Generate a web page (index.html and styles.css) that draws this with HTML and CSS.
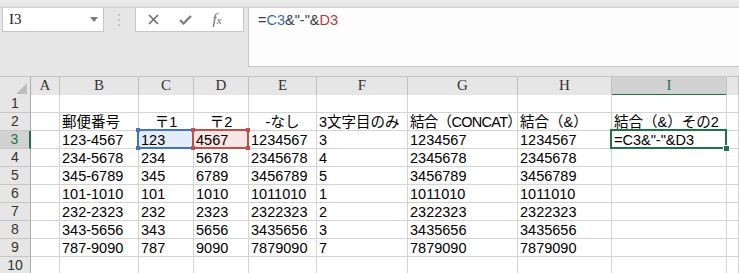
FILE: index.html
```html
<!DOCTYPE html>
<html lang="ja">
<head>
    <meta charset="UTF-8">
    <title>Excel 郵便番号</title>
    <link rel="stylesheet" href="styles.css">
</head>
<body>
    <div class="topstrip"></div>
    <div class="fbar">
        <div class="namebox">
            <span>I3</span>
            <svg class="dd" width="8" height="5" viewBox="0 0 8 5"><path d="M0 0H8L4 5Z" fill="#7a7a7a"/></svg>
        </div>
        <div class="grip">
            <svg width="3" height="14" viewBox="0 0 3 14"><rect x="0" y="1" width="2" height="2" fill="#c4c4c4"/><rect x="0" y="6" width="2" height="2" fill="#c4c4c4"/><rect x="0" y="11" width="2" height="2" fill="#c4c4c4"/></svg>
        </div>
        <div class="fbtns">
            <svg width="11" height="11" viewBox="0 0 11 11"><path d="M1 1L10 10M10 1L1 10" stroke="#707070" stroke-width="1.7"/></svg>
            <svg width="13" height="10" viewBox="0 0 13 10"><path d="M1 5L4.5 8.5L12 1" stroke="#7c7c7c" stroke-width="2.2" fill="none"/></svg>
            <span class="fx"><i>f</i><i class="x">x</i></span>
        </div>
        <div class="finput">=<span class="ref-b">C3</span>&amp;"-"&amp;<span class="ref-r">D3</span></div>
    </div>

    <div class="sheet">
        <div class="row hrow">
            <div class="corner"><svg width="11" height="11" viewBox="0 0 11 11"><path d="M11 0V11H0Z" fill="#bdbdbd"/></svg></div>
            <div class="ch">A</div><div class="ch">B</div><div class="ch">C</div><div class="ch">D</div><div class="ch">E</div>
            <div class="ch">F</div><div class="ch">G</div><div class="ch">H</div><div class="ch sel">I</div><div class="ch"></div>
        </div>
        <div class="row">
            <div class="rh">1</div>
            <div class="c"></div><div class="c"></div><div class="c"></div><div class="c"></div><div class="c"></div>
            <div class="c"></div><div class="c"></div><div class="c"></div><div class="c"></div><div class="c"></div>
        </div>
        <div class="row">
            <div class="rh">2</div>
            <div class="c"></div><div class="c">郵便番号</div><div class="c mid">〒1</div><div class="c mid">〒2</div><div class="c mid">-なし</div>
            <div class="c">3文字目のみ</div><div class="c tight">結合（CONCAT）</div><div class="c">結合（&amp;）</div><div class="c">結合（&amp;）その2</div><div class="c"></div>
        </div>
        <div class="row">
            <div class="rh sel">3</div>
            <div class="c"></div><div class="c">123-4567</div><div class="c blue">123</div><div class="c red">4567</div><div class="c">1234567</div>
            <div class="c">3</div><div class="c">1234567</div><div class="c">1234567</div><div class="c active">=C3&amp;"-"&amp;D3</div><div class="c"></div>
        </div>
        <div class="row">
            <div class="rh">4</div>
            <div class="c"></div><div class="c">234-5678</div><div class="c">234</div><div class="c">5678</div><div class="c">2345678</div>
            <div class="c">4</div><div class="c">2345678</div><div class="c">2345678</div><div class="c"></div><div class="c"></div>
        </div>
        <div class="row">
            <div class="rh">5</div>
            <div class="c"></div><div class="c">345-6789</div><div class="c">345</div><div class="c">6789</div><div class="c">3456789</div>
            <div class="c">5</div><div class="c">3456789</div><div class="c">3456789</div><div class="c"></div><div class="c"></div>
        </div>
        <div class="row">
            <div class="rh">6</div>
            <div class="c"></div><div class="c">101-1010</div><div class="c">101</div><div class="c">1010</div><div class="c">1011010</div>
            <div class="c">1</div><div class="c">1011010</div><div class="c">1011010</div><div class="c"></div><div class="c"></div>
        </div>
        <div class="row">
            <div class="rh">7</div>
            <div class="c"></div><div class="c">232-2323</div><div class="c">232</div><div class="c">2323</div><div class="c">2322323</div>
            <div class="c">2</div><div class="c">2322323</div><div class="c">2322323</div><div class="c"></div><div class="c"></div>
        </div>
        <div class="row">
            <div class="rh">8</div>
            <div class="c"></div><div class="c">343-5656</div><div class="c">343</div><div class="c">5656</div><div class="c">3435656</div>
            <div class="c">3</div><div class="c">3435656</div><div class="c">3435656</div><div class="c"></div><div class="c"></div>
        </div>
        <div class="row">
            <div class="rh">9</div>
            <div class="c"></div><div class="c">787-9090</div><div class="c">787</div><div class="c">9090</div><div class="c">7879090</div>
            <div class="c">7</div><div class="c">7879090</div><div class="c">7879090</div><div class="c"></div><div class="c"></div>
        </div>
        <div class="row">
            <div class="rh">10</div>
            <div class="c"></div><div class="c"></div><div class="c"></div><div class="c"></div><div class="c"></div>
            <div class="c"></div><div class="c"></div><div class="c"></div><div class="c"></div><div class="c"></div>
        </div>
    </div>
</body>
</html>
```

FILE: styles.css
```css
body {
    margin: 0;
    padding: 0;
    width: 739px;
    height: 273px;
    overflow: hidden;
    background-color: #e6e6e6;
    font-family: "Liberation Sans", "Noto Sans CJK JP", sans-serif;
    color: #000;
}
.topstrip {
    height: 7px;
    background: linear-gradient(#eeeeee, #e2e2e2);
    border-bottom: 1px solid #d0d0d0;
}
.fbar {
    display: flex;
    align-items: flex-start;
    height: 68px;
}
.namebox {
    display: flex;
    align-items: center;
    justify-content: space-between;
    box-sizing: border-box;
    width: 102px;
    height: 24px;
    margin-left: 2px;
    padding: 0 5px 0 6px;
    background-color: #fff;
    border: 1px solid #c6c6c6;
    border-top: none;
    font-family: "Liberation Serif", serif;
    font-size: 15px;
    color: #222;
}
.grip {
    display: flex;
    width: 31px;
    height: 24px;
    align-items: center;
    justify-content: center;
}
.fbtns {
    display: grid;
    grid-template-columns: 32px 32px 32px;
    justify-items: center;
    align-items: center;
    box-sizing: border-box;
    width: 109px;
    height: 24px;
    padding-left: 1px;
    background-color: #fff;
    border: 1px solid #c6c6c6;
    border-top: none;
}
.fx {
    font-family: "Liberation Serif", serif;
    font-size: 15px;
    color: #6a6a6a;
}
.fx .x {
    font-size: 11px;
}
.finput {
    flex: 1;
    box-sizing: border-box;
    height: 59px;
    margin-left: 4px;
    padding: 2px 9px;
    background-color: #fdfdfd;
    border: 1px solid #c6c6c6;
    border-top: none;
    border-right: none;
    font-size: 14.5px;
    line-height: 20px;
    color: #3c3c3c;
}
.ref-b { color: #3a6bb8; }
.ref-r { color: #b0383c; }

.sheet {
    border-top: 1px solid #c6c6c6;
}
.row {
    display: grid;
    grid-template-columns: 31px 29px 79px 55px 55px 68px 91px 110px 94px 115px 1fr;
    height: 18px;
}
.corner, .ch, .rh {
    box-sizing: border-box;
    background-color: #e6e6e6;
    color: #333;
    text-align: center;
}
.corner {
    display: flex;
    align-items: flex-end;
    justify-content: flex-end;
    padding: 0 3px 1px 0;
    border-right: 1px solid #ababab;
    border-bottom: 1px solid #ababab;
}
.ch {
    border-right: 1px solid #c0c0c0;
    border-bottom: 1px solid #ababab;
    font-family: "Liberation Serif", serif;
    font-size: 15px;
    line-height: 17px;
}
.ch.sel {
    background-color: #d2d2d2;
    color: #217346;
    border-bottom: 2px solid #217346;
}
.rh {
    border-right: 1px solid #ababab;
    border-bottom: 1px solid #c6c6c6;
    font-size: 14px;
    line-height: 17px;
}
.rh.sel {
    background-color: #d2d2d2;
    color: #217346;
    border-right: 2px solid #217346;
}
.c {
    position: relative;
    box-sizing: border-box;
    padding: 1px 2px 0;
    background-color: #fff;
    border-right: 1px solid #d4d4d4;
    border-bottom: 1px solid #d4d4d4;
    font-size: 14.5px;
    line-height: 16px;
    white-space: nowrap;
}
.c.mid {
    text-align: center;
}
.c.tight {
    letter-spacing: -0.7px;
}
.c.blue, .c.red, .c.active {
    z-index: 1;
}
.c.blue { background-color: #e4ecf8; }
.c.red { background-color: #fae4e4; }
.c.blue::before, .c.red::before, .c.active::before {
    content: "";
    position: absolute;
    top: -2px;
    left: -2px;
    right: -1px;
    bottom: -1px;
    border: 2px solid #4472c4;
}
.c.blue::after, .c.red::after {
    content: "";
    position: absolute;
    top: -3px;
    left: -3px;
    right: -2px;
    bottom: -2px;
    background:
        linear-gradient(#4472c4, #4472c4) left top / 4px 4px no-repeat,
        linear-gradient(#4472c4, #4472c4) right top / 4px 4px no-repeat,
        linear-gradient(#4472c4, #4472c4) left bottom / 4px 4px no-repeat,
        linear-gradient(#4472c4, #4472c4) right bottom / 4px 4px no-repeat;
}
.c.red::before {
    border-color: #c0504d;
}
.c.red::after {
    background:
        linear-gradient(#c0504d, #c0504d) left top / 4px 4px no-repeat,
        linear-gradient(#c0504d, #c0504d) right top / 4px 4px no-repeat,
        linear-gradient(#c0504d, #c0504d) left bottom / 4px 4px no-repeat,
        linear-gradient(#c0504d, #c0504d) right bottom / 4px 4px no-repeat;
}
.c.active::before {
    border-color: #217346;
}
.c.active::after {
    content: "";
    position: absolute;
    right: -3px;
    bottom: -3px;
    width: 5px;
    height: 5px;
    background-color: #217346;
    border-top: 1px solid #fff;
    border-left: 1px solid #fff;
}
```
